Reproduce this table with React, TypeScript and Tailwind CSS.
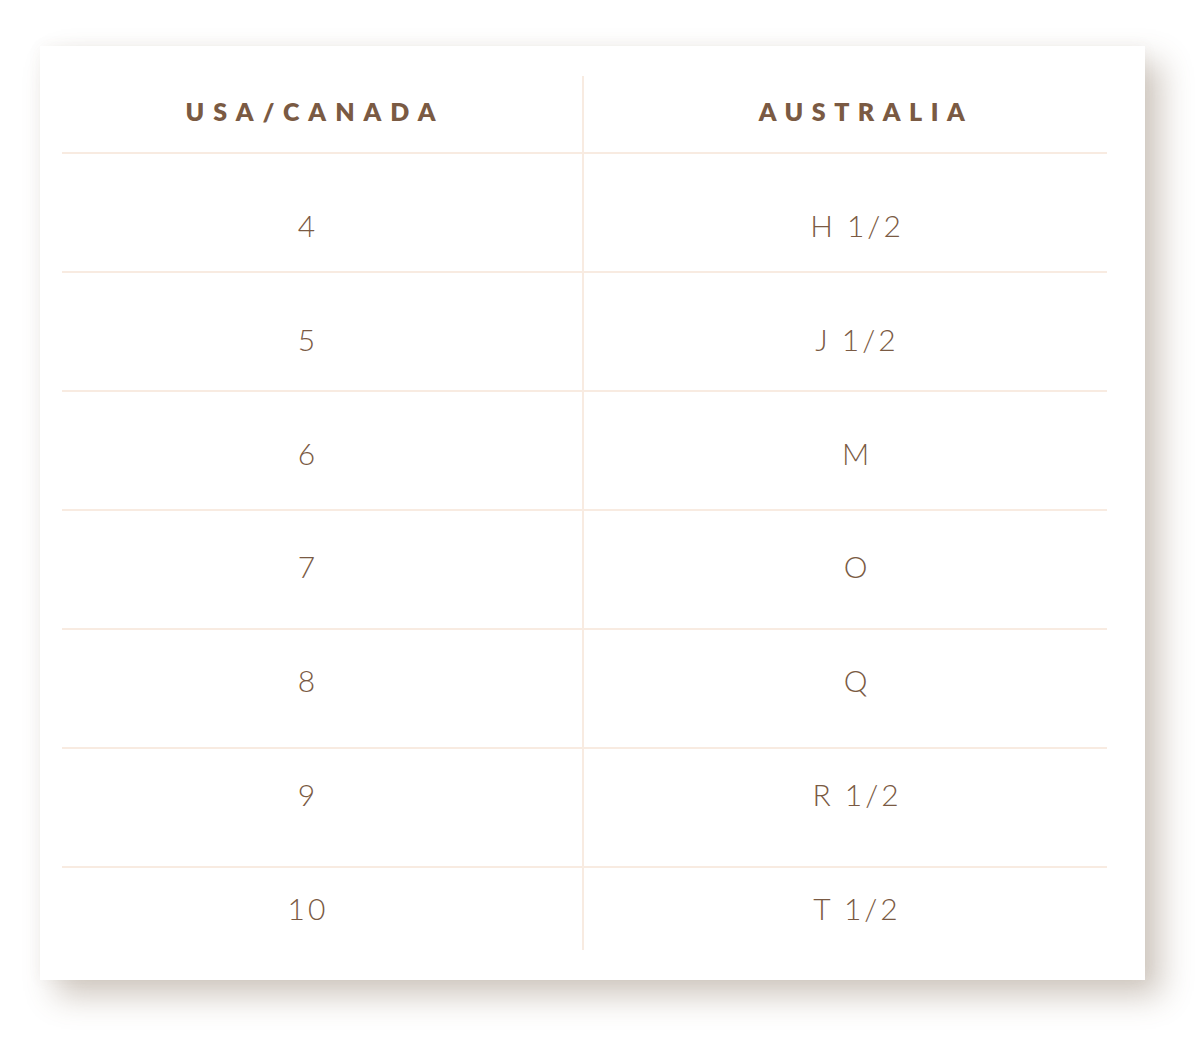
import React from "react";

const rows: { us: string; au: string; pt: string; h: string; border: boolean }[] = [
  { us: "4", au: "H 1/2", pt: "pt-[56px]", h: "h-[119px]", border: true },
  { us: "5", au: "J 1/2", pt: "pt-[51px]", h: "h-[119px]", border: true },
  { us: "6", au: "M", pt: "pt-[46px]", h: "h-[119px]", border: true },
  { us: "7", au: "O", pt: "pt-[40px]", h: "h-[119px]", border: true },
  { us: "8", au: "Q", pt: "pt-[35px]", h: "h-[119px]", border: true },
  { us: "9", au: "R 1/2", pt: "pt-[30px]", h: "h-[119px]", border: true },
  { us: "10", au: "T 1/2", pt: "pt-[25px]", h: "h-[82px]", border: false },
];

export default function App() {
  return (
    <div
      className="min-h-[1043px] w-[1200px] bg-white pl-[40px] pt-[46px]"
      style={{ fontFamily: "Lato, 'Open Sans', sans-serif" }}
    >
      <div className="w-[1105px] h-[934px] bg-white pl-[22px] pr-[38px] pt-[30px] pb-[30px] shadow-[16px_16px_30px_rgba(110,85,60,0.32),0_0_14px_rgba(120,100,80,0.05)]">
        <div className="flex flex-col text-[#7a5a43]">
          <div className="flex h-[78px] border-b-2 border-[#f8ebe1]">
            <div className="w-[522px] border-r-2 border-[#f8ebe1] pr-[14px] pt-[23px] text-center text-[25px] leading-[25px] font-extrabold tracking-[9px]">
              USA/CANADA
            </div>
            <div className="flex-1 pl-[41px] pt-[23px] text-center text-[25px] leading-[25px] font-extrabold tracking-[8.5px]">
              AUSTRALIA
            </div>
          </div>
          {rows.map((r) => (
            <div
              key={r.us}
              className={`flex ${r.h} ${r.border ? "border-b-2 border-[#f8ebe1]" : ""}`}
            >
              <div className={`w-[522px] border-r-2 border-[#f8ebe1] pr-[28px] ${r.pt} text-center text-[30px] leading-[30px] font-light tracking-[3px]`}>
                {r.us}
              </div>
              <div className={`flex-1 pl-[23px] ${r.pt} text-center text-[30px] leading-[30px] font-light tracking-[3px]`}>
                {r.au}
              </div>
            </div>
          ))}
        </div>
      </div>
    </div>
  );
}
